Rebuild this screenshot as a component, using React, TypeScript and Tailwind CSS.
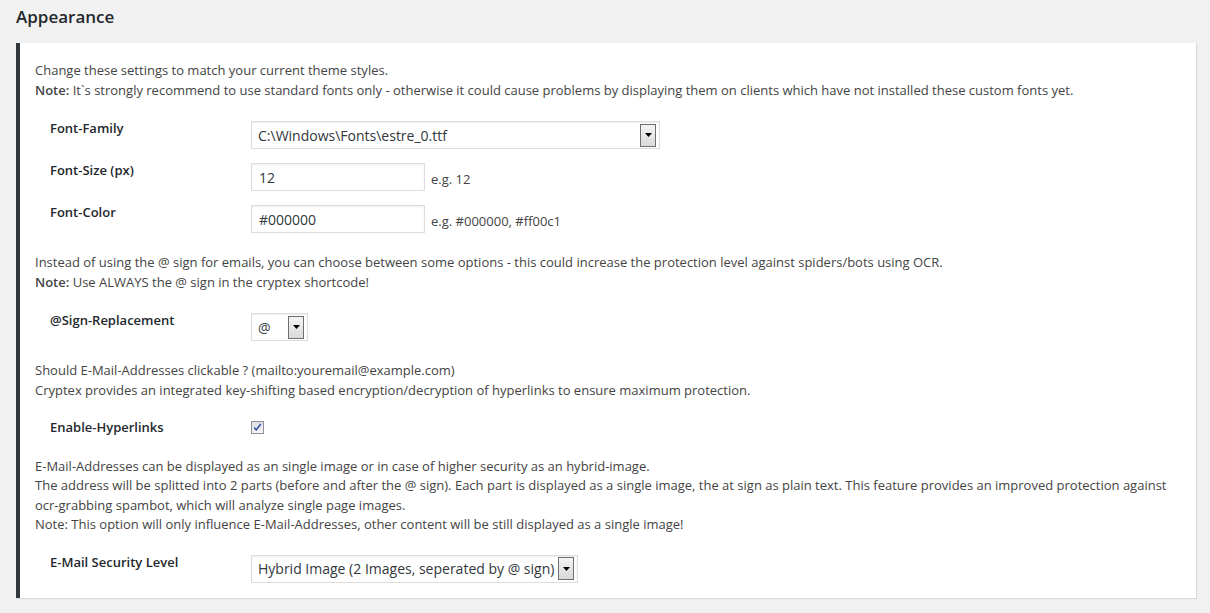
import type { ReactNode } from 'react'

const FONT = "font-['Open_Sans',_'Liberation_Sans',_sans-serif]"

function DropButton() {
  return (
    <span className="flex h-[23px] w-[16px] shrink-0 items-center justify-center border border-[#6f6f6f] bg-gradient-to-b from-[#f4f4f4] to-[#d9d9d9]">
      <svg width="7" height="4" viewBox="0 0 7 4">
        <path d="M0 0h7L3.5 4z" fill="#000" />
      </svg>
    </span>
  )
}

function Select({ value, width }: { value: string; width: string }) {
  return (
    <div
      className={`flex h-[28px] ${width} items-center border border-[#ddd] bg-white pl-[6px] pr-[3px] text-[14px] text-[#32373c] shadow-[inset_0_1px_2px_rgba(0,0,0,0.07)]`}
    >
      <span className="flex-1 whitespace-nowrap">{value}</span>
      <DropButton />
    </div>
  )
}

function TextInput({ value }: { value: string }) {
  return (
    <div className="flex h-[28px] w-[174px] items-center border border-[#ddd] bg-white pl-[7px] text-[14px] text-[#32373c] shadow-[inset_0_1px_2px_rgba(0,0,0,0.07)]">
      {value}
    </div>
  )
}

function Row({ label, mt, children }: { label: string; mt: string; children: ReactNode }) {
  return (
    <div className={`flex items-start pl-[15px] ${mt}`}>
      <div className="w-[201px] shrink-0 text-[13px] leading-[19.5px] font-semibold text-[#23282d]">{label}</div>
      <div className="mt-[2px] flex items-start">{children}</div>
    </div>
  )
}

function Hint({ children }: { children: ReactNode }) {
  return <span className="ml-[6px] mt-[7px] text-[13px] leading-[19.5px] text-[#444]">{children}</span>
}

function Checkbox() {
  return (
    <svg width="13" height="13" viewBox="0 0 13 13" className="mt-[0.5px]">
      <defs>
        <linearGradient id="cb" x1="0" y1="0" x2="0" y2="1">
          <stop offset="0" stopColor="#dcdde3" />
          <stop offset="1" stopColor="#f8f8fa" />
        </linearGradient>
      </defs>
      <rect x="0.5" y="0.5" width="12" height="12" fill="url(#cb)" stroke="#8e8f99" />
      <path d="M3.2 6.6l2 2.3 4.5-6" fill="none" stroke="#3554a3" strokeWidth="1.6" />
    </svg>
  )
}

export default function App() {
  return (
    <div className={`min-h-[613px] bg-[#f1f1f1] px-[16px] pb-[16px] pt-[6px] ${FONT}`}>
      <h2 className="text-[17px] leading-[22px] font-semibold text-[#23282d]">Appearance</h2>

      <div className="mt-[15px] mr-[-2px] border-l-4 border-[#32373c] bg-white pb-[15px] pl-[15px] pr-[15px] pt-[18px] shadow-[1px_1px_1px_0_rgba(0,0,0,0.1)]">
        <div className="text-[13px] leading-[19.5px] text-[#444]">
          <p>Change these settings to match your current theme styles.</p>
          <p>
            <b className="font-semibold">Note:</b> It`s strongly recommend to use standard fonts only - otherwise it could cause problems by displaying them on clients which have not installed these custom fonts yet.
          </p>
        </div>

        <Row label="Font-Family" mt="mt-[19px]">
          <Select value="C:\Windows\Fonts\estre_0.ttf" width="w-[409px]" />
        </Row>
        <Row label="Font-Size (px)" mt="mt-[12px]">
          <TextInput value="12" />
          <Hint>e.g. 12</Hint>
        </Row>
        <Row label="Font-Color" mt="mt-[12px]">
          <TextInput value="#000000" />
          <Hint>e.g. #000000, #ff00c1</Hint>
        </Row>

        <div className="mt-[20px] text-[13px] leading-[19.5px] text-[#444]">
          <p>Instead of using the @ sign for emails, you can choose between some options - this could increase the protection level against spiders/bots using OCR.</p>
          <p>
            <b className="font-semibold">Note:</b> Use ALWAYS the @ sign in the cryptex shortcode!
          </p>
        </div>

        <Row label="@Sign-Replacement" mt="mt-[19px]">
          <Select value="@" width="w-[57px]" />
        </Row>

        <div className="mt-[20px] text-[13px] leading-[19.5px] text-[#444]">
          <p>Should E-Mail-Addresses clickable ? (mailto:youremail@example.com)</p>
          <p>Cryptex provides an integrated key-shifting based encryption/decryption of hyperlinks to ensure maximum protection.</p>
        </div>

        <Row label="Enable-Hyperlinks" mt="mt-[18px]">
          <Checkbox />
        </Row>

        <div className="mt-[19px] text-[13px] leading-[19.5px] text-[#444]">
          <p>E-Mail-Addresses can be displayed as an single image or in case of higher security as an hybrid-image.</p>
          <p>The address will be splitted into 2 parts (before and after the @ sign). Each part is displayed as a single image, the at sign as plain text. This feature provides an improved protection against ocr-grabbing spambot, which will analyze single page images.</p>
          <p>Note: This option will only influence E-Mail-Addresses, other content will be still displayed as a single image!</p>
        </div>

        <Row label="E-Mail Security Level" mt="mt-[18px]">
          <Select value="Hybrid Image (2 Images, seperated by @ sign)" width="w-[327px]" />
        </Row>
      </div>
    </div>
  )
}
